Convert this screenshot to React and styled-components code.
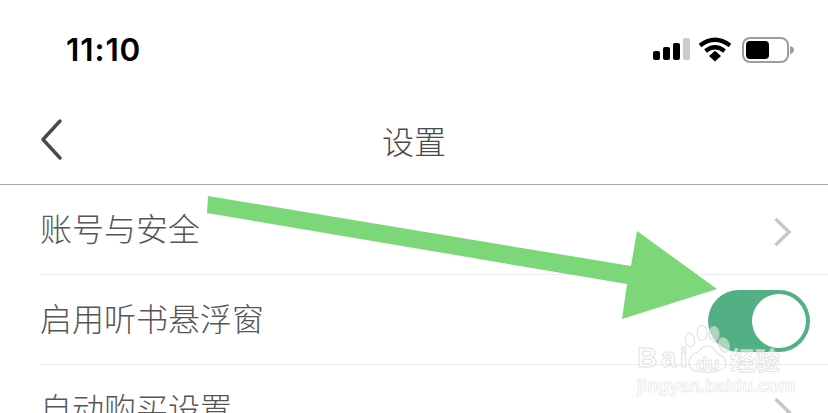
import React from "react";
import styled, { createGlobalStyle } from "styled-components";

const cjk = `"Noto Sans CJK SC", "Noto Sans", sans-serif`;

const Global = createGlobalStyle`
  html, body { margin: 0; padding: 0; background: #fff; }
  body { font-family: ${cjk}; }
`;

const Screen = styled.div`
  position: relative;
  width: 828px;
  height: 413px;
  overflow: hidden;
  background: #fff;
`;

const StatusBar = styled.div`
  height: 100px;
  box-sizing: border-box;
  padding: 28px 34px 0 66px;
  display: flex;
  justify-content: space-between;
  align-items: flex-start;
`;

const Clock = styled.div`
  font-family: Inter, "Liberation Sans", sans-serif;
  font-size: 31.5px;
  font-weight: 600;
  line-height: 44px;
  letter-spacing: 0.9px;
  color: #000;
`;

const StatusIcons = styled.svg`
  width: 143px;
  height: 26px;
  margin-top: 9px;
`;

const NavBar = styled.div`
  height: 85px;
  box-sizing: border-box;
  border-bottom: 1px solid #a9a9ab;
  display: flex;
  align-items: center;
  justify-content: center;
  position: relative;
`;

const BackIcon = styled.svg`
  position: absolute;
  left: 40px;
  top: 19px;
  width: 24px;
  height: 42px;
`;

const Title = styled.div`
  font-size: 32px;
  line-height: 42px;
  color: #4a4a4d;
  margin-top: -5px;
  font-weight: 300;
`;

const List = styled.div`
  padding-left: 40px;
`;

const Row = styled.div`
  height: 90px;
  box-sizing: border-box;
  border-bottom: 1px solid #eaebf2;
  display: flex;
  align-items: center;
  justify-content: space-between;
  padding-bottom: 6px;
  padding-right: ${p => p.$pad}px;
`;

const Label = styled.div`
  font-size: 32px;
  line-height: 44px;
  font-weight: 300;
  color: #555558;
`;

const Chevron = styled.svg`
  width: 18px;
  height: 30px;
  margin-top: 10px;
`;

const Toggle = styled.div`
  width: 102px;
  height: 62px;
  margin-top: 9px;
  border-radius: 31px;
  background: #53b084;
  display: flex;
  align-items: center;
  justify-content: flex-end;
  padding-right: 4px;
  box-sizing: border-box;
`;

const Knob = styled.div`
  width: 54px;
  height: 54px;
  border-radius: 50%;
  background: #fff;
`;

const Arrow = styled.svg`
  position: absolute;
  left: 0;
  top: 0;
  width: 828px;
  height: 413px;
  pointer-events: none;
`;

const Watermark = styled.div`
  position: absolute;
  left: 634px;
  top: 322px;
  width: 190px;
  height: 76px;
  opacity: 0.75;
`;

const Paw = styled.svg`
  position: absolute;
  left: 50px;
  top: 3px;
  width: 46px;
  height: 50px;
`;

const Brand = styled.div`
  position: absolute;
  top: 22px;
  left: 3px;
  font-family: "Liberation Sans", sans-serif;
  font-size: 28px;
  font-weight: 700;
  line-height: 28px;
  letter-spacing: 3.5px;
  color: rgba(255, 255, 255, 0.8);
  -webkit-text-stroke: 1px #d8d8d8;
`;

const BrandDu = styled.div`
  position: absolute;
  top: 32px;
  left: 62px;
  font-family: "Liberation Sans", sans-serif;
  font-size: 19px;
  font-weight: 700;
  line-height: 20px;
  color: rgba(255, 255, 255, 0.8);
  -webkit-text-stroke: 0.8px #d8d8d8;
`;

const BrandCn = styled.div`
  position: absolute;
  top: 21px;
  left: 96px;
  font-size: 25px;
  font-weight: 700;
  line-height: 32px;
  color: rgba(255, 255, 255, 0.8);
  -webkit-text-stroke: 0.8px #d8d8d8;
`;

const Url = styled.div`
  position: absolute;
  top: 52px;
  left: 3px;
  font-family: "Liberation Sans", sans-serif;
  font-size: 18px;
  line-height: 24px;
  font-weight: 700;
  white-space: nowrap;
  color: rgba(255, 255, 255, 0.85);
  -webkit-text-stroke: 0.7px #dedede;
`;

const ChevronRight = () => (
  <Chevron viewBox="0 0 18 30">
    <path d="M1.5 2 L15 15 L1.5 28" fill="none" stroke="#c8c8cc" strokeWidth="3.6" />
  </Chevron>
);

export default function App() {
  return (
    <Screen>
      <Global />
      <StatusBar>
        <Clock>11:10</Clock>
        <StatusIcons viewBox="0 0 143 26">
          <rect x="2" y="14" width="7" height="9" rx="2" fill="#000" />
          <rect x="12" y="10" width="7" height="13" rx="2" fill="#000" />
          <rect x="22" y="6" width="7" height="17" rx="2" fill="#000" />
          <rect x="32" y="1" width="7" height="22" rx="2" fill="#cbcbcb" />
          <path d="M49 8.5 Q64 -3 79 8.5" fill="none" stroke="#000" strokeWidth="4.2" />
          <path d="M54.5 14 Q64 6.5 73.5 14" fill="none" stroke="#000" strokeWidth="4.2" />
          <path d="M58 19 L64 13.8 L70 19 L64 24.5 Z" fill="#000" />
          <rect x="92" y="1" width="45" height="24" rx="7" fill="none" stroke="#9d9d9d" strokeWidth="2" />
          <rect x="95" y="4" width="23" height="18" rx="4" fill="#000" />
          <path d="M139 9 Q143 10 143 13 Q143 16 139 17 Z" fill="#9d9d9d" />
        </StatusIcons>
      </StatusBar>
      <NavBar>
        <BackIcon viewBox="0 0 24 42">
          <path d="M20 2 L3 20.5 L20 39" fill="none" stroke="#4a4a4d" strokeWidth="3.4" strokeLinecap="round" strokeLinejoin="round" />
        </BackIcon>
        <Title>设置</Title>
      </NavBar>
      <List>
        <Row $pad={36}>
          <Label>账号与安全</Label>
          <ChevronRight />
        </Row>
        <Row $pad={18}>
          <Label>启用听书悬浮窗</Label>
          <Toggle>
            <Knob />
          </Toggle>
        </Row>
        <Row $pad={36}>
          <Label>自动购买设置</Label>
          <ChevronRight />
        </Row>
      </List>
      <Arrow viewBox="0 0 828 413">
        <polygon
          points="208,196 631,266 637,231 717,289 622,319 627,284 207,213"
          fill="#7bd777"
        />
      </Arrow>
      <Watermark>
        <Paw viewBox="0 0 46 50">
          <g stroke="#d8d8d8" strokeWidth="1.1" fill="rgba(255,255,255,0.4)">
            <ellipse cx="6" cy="15" rx="4.5" ry="7" transform="rotate(-12 6 15)" />
            <ellipse cx="18" cy="8" rx="5" ry="7.5" />
            <ellipse cx="30" cy="9" rx="5" ry="7.5" fill="rgba(235,245,240,0.75)" />
            <ellipse cx="40" cy="20" rx="5" ry="7.5" transform="rotate(-20 40 20)" fill="rgba(235,245,240,0.75)" />
            <path d="M9 45 C2 40 5 31 12 28 C16 26 18 21 24 21 C30 21 31 27 36 30 C43 34 44 42 37 45 C30 48 16 48 9 45 Z" />
          </g>
        </Paw>
        <Brand>Bai</Brand>
        <BrandDu>du</BrandDu>
        <BrandCn>经验</BrandCn>
        <Url>jingyan.baidu.com</Url>
      </Watermark>
    </Screen>
  );
}
